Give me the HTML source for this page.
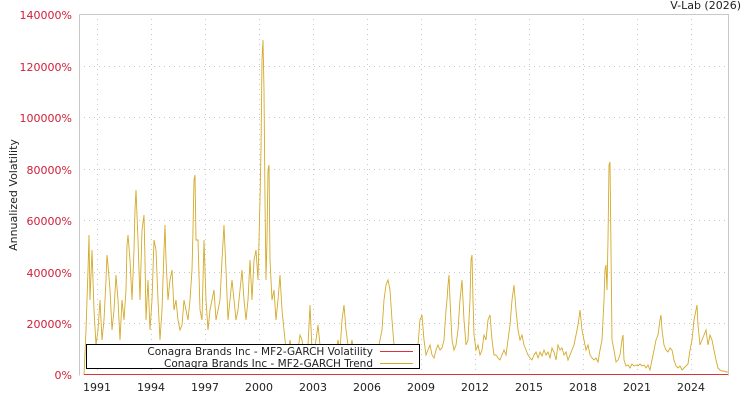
<!DOCTYPE html>
<html><head><meta charset="utf-8"><style>
html,body{margin:0;padding:0;background:#fff;}
svg{display:block;font-family:"DejaVu Sans","Liberation Sans",sans-serif;}
</style></head><body>
<svg width="750" height="400" viewBox="0 0 750 400" xmlns="http://www.w3.org/2000/svg">
<rect width="750" height="400" fill="#fff"/>
<text x="741" y="9" font-size="11" text-anchor="end" fill="#222">V-Lab (2026)</text>
<g stroke="#c8c8c8" stroke-width="1" stroke-dasharray="1,4">
<line x1="79" y1="66.5" x2="728" y2="66.5"/><line x1="79" y1="117.5" x2="728" y2="117.5"/>
<line x1="79" y1="169.5" x2="728" y2="169.5"/><line x1="79" y1="220.5" x2="728" y2="220.5"/>
<line x1="79" y1="272.5" x2="728" y2="272.5"/><line x1="79" y1="323.5" x2="728" y2="323.5"/>
<line x1="97.5" y1="14" x2="97.5" y2="375"/><line x1="151.5" y1="14" x2="151.5" y2="375"/>
<line x1="205.5" y1="14" x2="205.5" y2="375"/><line x1="259.5" y1="14" x2="259.5" y2="375"/>
<line x1="313.5" y1="14" x2="313.5" y2="375"/><line x1="367.5" y1="14" x2="367.5" y2="375"/>
<line x1="421.5" y1="14" x2="421.5" y2="375"/><line x1="475.5" y1="14" x2="475.5" y2="375"/>
<line x1="529.5" y1="14" x2="529.5" y2="375"/><line x1="583.5" y1="14" x2="583.5" y2="375"/>
<line x1="637.5" y1="14" x2="637.5" y2="375"/><line x1="691.5" y1="14" x2="691.5" y2="375"/>
</g>
<path d="M79.5 14.5H728.5V375.5M79.5 14.5V375.5" fill="none" stroke="#c8c8c8"/>
<polyline fill="none" stroke="#d4aa2a" stroke-width="0.9" points="84,375 86,330 88,270 89,235 90,300 92,250 94,310 96,345 98,330 100,300 102,340 104,320 106,280 107,255 108,265 110,290 112,330 114,310 116,275 118,300 120,340 122,300 124,320 126,290 127,245 128,235 130,260 132,300 134,250 135,210 136,190 138,240 140,300 142,230 144,215 145,260 146,320 148,280 150,330 152,300 154,240 156,250 158,300 160,340 162,310 164,250 165,225 166,260 168,300 170,280 172,270 174,310 176,300 178,320 180,330 182,325 184,300 186,310 188,320 190,300 192,270 193,230 194,180 195,175 196,240 198,240 200,310 202,320 204,240 206,300 208,330 210,310 212,300 214,290 216,320 218,310 220,300 222,260 224,225 226,270 228,320 230,300 232,280 234,300 236,320 238,310 240,290 242,270 244,300 246,320 248,300 250,260 252,300 254,260 256,250 258,280 260,200 261,150 262,60 263,40 264,90 265,200 266,280 267,240 268,170 269,165 270,260 272,300 274,290 276,320 278,300 280,275 282,310 284,330 286,350 288,355 290,340 292,355 294,345 296,360 298,350 300,335 302,340 304,355 306,360 308,345 310,305 312,350 314,350 316,340 318,325 320,345 322,355 324,350 326,360 328,350 330,345 332,358 334,350 336,352 338,340 340,350 342,320 344,305 346,330 348,345 350,350 352,340 354,355 356,350 358,360 360,365 362,355 364,350 366,362 368,360 370,355 372,365 374,358 376,360 378,350 380,340 382,330 384,300 386,285 388,280 390,290 392,320 394,345 396,350 398,355 400,360 402,358 404,362 406,365 408,368 410,368 412,365 414,360 416,355 418,345 420,320 422,315 424,340 426,355 428,350 430,345 432,355 434,358 436,350 438,345 440,350 442,348 444,340 446,310 447,300 448,285 449,275 450,300 452,340 454,350 456,345 458,330 460,300 461,290 462,280 464,320 466,345 468,340 470,300 471,260 472,255 473,300 474,335 476,350 478,345 480,355 482,350 484,335 486,340 488,320 490,315 492,340 494,355 496,355 498,358 500,360 502,355 504,350 506,355 508,340 510,325 512,300 514,285 516,310 518,330 520,340 522,335 524,345 526,350 528,355 530,358 532,360 534,355 536,352 538,358 540,352 542,356 544,350 546,355 548,352 550,358 552,348 554,352 556,360 558,345 560,350 562,348 564,355 566,352 568,360 570,355 572,350 574,345 576,335 578,325 580,310 582,330 584,340 586,350 588,345 590,355 592,358 594,360 596,358 598,362 600,350 602,340 604,300 605,270 606,265 607,290 608,240 609,165 610,162 611,250 612,340 614,350 616,362 618,360 620,355 622,340 623,335 624,360 626,366 628,365 630,368 632,364 634,366 636,365 638,366 640,364 642,366 644,365 646,368 648,365 650,370 652,360 654,350 656,340 658,335 660,320 661,315 662,330 664,345 666,350 668,352 670,348 672,350 674,360 676,366 678,368 680,366 682,370 684,368 686,366 688,364 690,350 692,340 694,320 696,310 697,305 698,325 700,345 702,340 704,335 706,330 708,345 710,335 712,340 714,350 716,360 718,368 720,370 722,371 724,371 726,372 728,372"/>
<line x1="84" y1="374.5" x2="728" y2="374.5" stroke="#e03040" stroke-width="1"/>
<g font-size="11" fill="#d0203a" text-anchor="end">
<text x="72" y="19">140000%</text><text x="72" y="71">120000%</text><text x="72" y="122">100000%</text>
<text x="72" y="174">80000%</text><text x="72" y="225">60000%</text><text x="72" y="277">40000%</text>
<text x="72" y="328">20000%</text><text x="72" y="379">0%</text>
</g>
<text x="17" y="195" font-size="11" fill="#222" text-anchor="middle" transform="rotate(-90 17 195)">Annualized Volatility</text>
<g font-size="11" fill="#222" text-anchor="middle">
<text x="97" y="391">1991</text><text x="151" y="391">1994</text><text x="205" y="391">1997</text>
<text x="259" y="391">2000</text><text x="313" y="391">2003</text><text x="367" y="391">2006</text>
<text x="421" y="391">2009</text><text x="475" y="391">2012</text><text x="529" y="391">2015</text>
<text x="583" y="391">2018</text><text x="637" y="391">2021</text><text x="691" y="391">2024</text>
</g>
<rect x="86.5" y="344.5" width="333" height="24" fill="#fff" stroke="#000"/>
<g font-size="10.5" fill="#222" text-anchor="end">
<text x="373" y="355">Conagra Brands Inc - MF2-GARCH Volatility</text>
<text x="373" y="367">Conagra Brands Inc - MF2-GARCH Trend</text>
</g>
<path d="M380 351.5H413" stroke="#e03040" stroke-width="1" fill="none"/>
<path d="M380 363.5H413" stroke="#d4aa2a" stroke-width="1" fill="none"/>
</svg>
</body></html>
